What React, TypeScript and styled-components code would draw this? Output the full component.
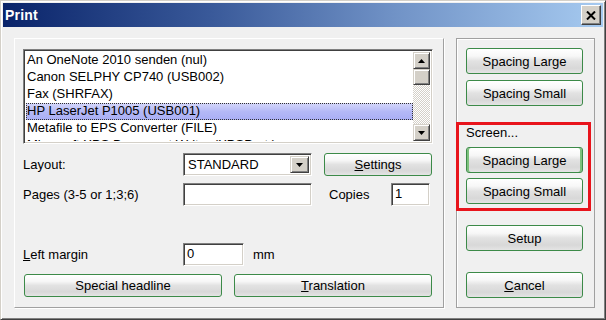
import React from "react";
import styled, { createGlobalStyle, css } from "styled-components";

const GlobalStyle = createGlobalStyle`
  html, body {
    margin: 0;
    padding: 0;
    background: #f0f0f0;
  }
  body {
    font-family: "Liberation Sans", Arial, sans-serif;
    font-size: 13px;
    color: #000;
  }
`;

const Window = styled.div`
  box-sizing: border-box;
  width: 606px;
  height: 320px;
  background: #f0f0f0;
  border: 1px solid;
  border-color: #d4d0c8 #404040 #404040 #d4d0c8;
  box-shadow: inset 1px 1px #fff, inset -1px -1px #808080;
  padding: 2px;
  display: flex;
  flex-direction: column;
`;

const TitleBar = styled.div`
  height: 24px;
  flex: none;
  display: flex;
  align-items: center;
  justify-content: space-between;
  padding-left: 2px;
  background: linear-gradient(to right, #0a246a 0%, #3a5a9a 35%, #7092c6 65%, #a6caf0 100%);
`;

const Title = styled.span`
  color: #fff;
  font-weight: bold;
  font-size: 14px;
  letter-spacing: 0.2px;
`;

const CloseButton = styled.div`
  box-sizing: border-box;
  width: 20px;
  height: 20px;
  margin-right: 2px;
  background: #d4d0c8;
  border: 1px solid;
  border-color: #fff #404040 #404040 #fff;
  box-shadow: inset -1px -1px #808080;
  display: flex;
  align-items: center;
  justify-content: center;
`;

const Body = styled.div`
  flex: 1;
  display: flex;
  gap: 12px;
  padding: 11px 8px 0 11px;
`;

const LeftFrame = styled.div`
  box-sizing: border-box;
  width: 430px;
  height: 270px;
  border: 1px solid;
  border-color: #fff #a0a0a0 #a0a0a0 #fff;
  box-shadow: 1px 1px 0 #fff;
  padding: 10px 0 0 8px;
  display: flex;
  flex-direction: column;
`;

const RightPanel = styled.div`
  box-sizing: border-box;
  width: 139px;
  height: 270px;
  border: 1px solid #a0a0a0;
  box-shadow: inset 1px 1px #fff;
  padding: 9px;
  display: flex;
  flex-direction: column;
`;

const sunken = css`
  box-sizing: border-box;
  background: #fff;
  border: 1px solid;
  border-color: #808080 #fff #fff #808080;
  box-shadow: inset 1px 1px #404040, inset -1px -1px #d4d0c8;
`;

const ListBox = styled.div`
  ${sunken};
  width: 410px;
  height: 95px;
  padding: 2px;
  display: flex;
`;

const Items = styled.div`
  flex: 1;
  overflow: hidden;
`;

const Item = styled.div<{ $selected?: boolean }>`
  box-sizing: border-box;
  height: 17px;
  line-height: 16px;
  padding-left: 1px;
  white-space: nowrap;
  ${(p) =>
    p.$selected &&
    css`
      background: linear-gradient(to bottom, #d6d8fa 0%, #b4b9f6 50%, #a9aef4 100%);
      outline: 1px dotted #303030;
      outline-offset: -1px;
    `}
`;

const ScrollBar = styled.div`
  width: 17px;
  display: flex;
  flex-direction: column;
`;

const raised = css`
  box-sizing: border-box;
  background: #d4d0c8;
  border: 1px solid;
  border-color: #d4d0c8 #404040 #404040 #d4d0c8;
  box-shadow: inset 1px 1px #fff, inset -1px -1px #808080;
`;

const ScrollButton = styled.div`
  ${raised};
  height: 17px;
  flex: none;
  display: flex;
  align-items: center;
  justify-content: center;
`;

const Thumb = styled.div`
  ${raised};
  height: 16px;
  flex: none;
`;

const Track = styled.div`
  flex: 1;
  background-color: #fff;
  background-image: repeating-conic-gradient(#d4d0c8 0 25%, #fff 0 50%);
  background-size: 2px 2px;
`;

const Row = styled.div<{ $top: number }>`
  display: flex;
  align-items: center;
  height: 23px;
  margin-top: ${(p) => p.$top}px;
`;

const Label = styled.span<{ $width?: number }>`
  width: ${(p) => (p.$width ? `${p.$width}px` : "auto")};
  flex: none;
  white-space: nowrap;
`;

const Input = styled.div<{ $width: number }>`
  ${sunken};
  width: ${(p) => p.$width}px;
  height: 23px;
  padding: 0 3px;
  line-height: 20px;
  font-size: 13px;
`;

const Select = styled.div`
  ${sunken};
  width: 129px;
  height: 23px;
  padding: 2px;
  display: flex;
  align-items: stretch;
`;

const SelectValue = styled.span`
  flex: 1;
  padding-left: 2px;
  line-height: 18px;
`;

const DropButton = styled.div`
  ${raised};
  width: 19px;
  display: flex;
  align-items: center;
  justify-content: center;
`;

const Button = styled.div<{ $width?: number; $height?: number; $active?: boolean; $left?: number }>`
  box-sizing: border-box;
  width: ${(p) => p.$width ?? 117}px;
  height: ${(p) => p.$height ?? 26}px;
  margin-left: ${(p) => p.$left ?? 0}px;
  flex: none;
  border: 1px solid #3c8a48;
  border-radius: 3px;
  background: linear-gradient(to bottom, #ffffff 0%, #f7f7f7 30%, #e2e2e2 50%, #d8d8d8 80%, #e4e4e4 100%);
  box-shadow: inset 0 1px #fff;
  display: flex;
  align-items: center;
  justify-content: center;
  font-size: 13px;
  white-space: nowrap;
  ${(p) =>
    p.$active &&
    css`
      box-shadow: inset 2px 0 #7cc07c, inset -2px 0 #7cc07c, inset 0 1px #fff;
    `}
`;

const ButtonStack = styled.div<{ $top: number }>`
  margin-top: ${(p) => p.$top}px;
`;

const ScreenGroup = styled.div`
  box-sizing: border-box;
  width: 135px;
  margin: 16px 0 0 -10px;
  border: 3px solid #e8141c;
  padding: 0 0 4px 7px;
  display: flex;
  flex-direction: column;
`;

const GroupTitle = styled.div`
  height: 16px;
  line-height: 16px;
`;

const Arrow = ({ dir }: { dir: "up" | "down" }) => (
  <svg width="7" height="4" viewBox="0 0 7 4">
    <polygon points={dir === "up" ? "3.5,0 7,4 0,4" : "0,0 7,0 3.5,4"} fill="#000" />
  </svg>
);

const printers = [
  "An OneNote 2010 senden (nul)",
  "Canon SELPHY CP740 (USB002)",
  "Fax (SHRFAX)",
  "HP LaserJet P1005 (USB001)",
  "Metafile to EPS Converter (FILE)",
  "Microsoft XPS Document Writer (XPSPort:)",
];

export default function App() {
  return (
    <>
      <GlobalStyle />
      <Window>
        <TitleBar>
          <Title>Print</Title>
          <CloseButton>
            <svg width="10" height="9" viewBox="0 0 10 9">
              <path d="M1 0.5 L9 8.5 M9 0.5 L1 8.5" stroke="#000" strokeWidth="2" />
            </svg>
          </CloseButton>
        </TitleBar>
        <Body>
          <LeftFrame>
            <ListBox>
              <Items>
                {printers.map((name, i) => (
                  <Item key={i} $selected={i === 3}>
                    {name}
                  </Item>
                ))}
              </Items>
              <ScrollBar>
                <ScrollButton>
                  <Arrow dir="up" />
                </ScrollButton>
                <Thumb />
                <Track />
                <ScrollButton>
                  <Arrow dir="down" />
                </ScrollButton>
              </ScrollBar>
            </ListBox>

            <Row $top={9}>
              <Label $width={160}>Layout:</Label>
              <Select>
                <SelectValue>STANDARD</SelectValue>
                <DropButton>
                  <Arrow dir="down" />
                </DropButton>
              </Select>
              <Button $width={108} $height={23} $left={12}>
                <span>
                  <u>S</u>ettings
                </span>
              </Button>
            </Row>

            <Row $top={7}>
              <Label $width={160}>Pages (3-5 or 1;3;6)</Label>
              <Input $width={129} />
              <Label $width={62} style={{ marginLeft: 17 }}>
                Copies
              </Label>
              <Input $width={39}>1</Input>
            </Row>

            <Row $top={37}>
              <Label $width={160}>
                <u>L</u>eft margin
              </Label>
              <Input $width={61}>0</Input>
              <Label style={{ marginLeft: 9 }}>mm</Label>
            </Row>

            <Row $top={8}>
              <Button $width={198} $height={23} $left={1}>
                Special headline
              </Button>
              <Button $width={198} $height={23} $left={12}>
                <span>
                  <u>T</u>ranslation
                </span>
              </Button>
            </Row>
          </LeftFrame>

          <RightPanel>
            <Button>Spacing Large</Button>
            <ButtonStack $top={6}>
              <Button>Spacing Small</Button>
            </ButtonStack>

            <ScreenGroup>
              <GroupTitle>Screen...</GroupTitle>
              <ButtonStack $top={6}>
                <Button $active>Spacing Large</Button>
              </ButtonStack>
              <ButtonStack $top={5}>
                <Button>Spacing Small</Button>
              </ButtonStack>
            </ScreenGroup>

            <ButtonStack $top={14}>
              <Button>Setup</Button>
            </ButtonStack>
            <ButtonStack $top={21}>
              <Button>
                <span>
                  <u>C</u>ancel
                </span>
              </Button>
            </ButtonStack>
          </RightPanel>
        </Body>
      </Window>
    </>
  );
}
